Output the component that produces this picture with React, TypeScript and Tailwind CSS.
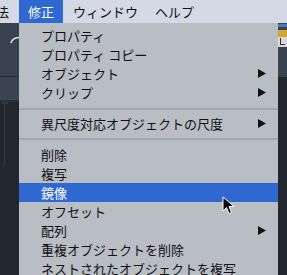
import React from 'react';

type Item = { label: string; sub?: boolean; active?: boolean } | 'sep1' | 'sep2';

const items: Item[] = [
  { label: 'プロパティ' },
  { label: 'プロパティ コピー' },
  { label: 'オブジェクト', sub: true },
  { label: 'クリップ', sub: true },
  'sep1',
  { label: '異尺度対応オブジェクトの尺度', sub: true },
  'sep2',
  { label: '削除' },
  { label: '複写' },
  { label: '鏡像', active: true },
  { label: 'オフセット' },
  { label: '配列', sub: true },
  { label: '重複オブジェクトを削除' },
  { label: 'ネストされたオブジェクトを複写' },
];

const Arrow = ({ white }: { white?: boolean }) => (
  <svg width="8" height="9" viewBox="0 0 8 9" className="absolute left-[239px] top-[5px]">
    <polygon points="0,0 8,4.5 0,9" fill={white ? '#fff' : '#111'} />
  </svg>
);

const App = () => {
  return (
    <div
      className="relative w-[287px] h-[275px] overflow-hidden flex flex-col bg-[#22272e]"
      style={{ fontFamily: '"Noto Sans CJK JP", "Noto Sans", sans-serif' }}
    >
      {/* menu bar */}
      <div className="h-[23px] flex items-stretch bg-[#d4d9e5] text-[13px] text-[#111] shrink-0">
        <div className="w-[19px] overflow-hidden flex items-center">
          <span className="ml-[-4px] whitespace-nowrap">法</span>
        </div>
        <div className="w-[44px] bg-[#2e68d0] text-white flex items-center pl-[9px]">修正</div>
        <div className="w-[92px] flex items-center pl-[10px] whitespace-nowrap">ウィンドウ</div>
        <div className="flex items-center">ヘルプ</div>
      </div>

      <div className="flex flex-1">
        {/* left canvas strip */}
        <div className="w-[19px] flex flex-col">
          <div className="h-[53px] bg-[#3a414e] relative">
            <svg width="10" height="8" viewBox="0 0 10 8" className="absolute left-[10px] top-[13px]">
              <path d="M1 7 Q2 2 9 1.5" stroke="#d8dce2" strokeWidth="1.6" fill="none" />
            </svg>
          </div>
          <div className="h-[1px] bg-[#262b33]" />
          <div className="h-[23px] bg-[#3c4350]" />
          <div className="h-[2px] bg-[#2a2f38]" />
          <div className="flex-1 bg-[#22272e] relative">
            <div className="absolute left-[4px] top-[2px] w-[1px] h-[62px] bg-[#353b45]" />
            <div className="absolute left-[2px] top-0 w-[6px] h-[2px] bg-[#353b45]" />
          </div>
        </div>

        {/* dropdown */}
        <div className="w-[259px] bg-[#b9bdc4] pt-[3px] text-[13px] leading-[19px] text-[#111]">
          {items.map((it, i) => {
            if (it === 'sep1')
              return <div key={i} className="mt-[6px] mb-[4px] h-[2px] bg-[#a3a7ae]" />;
            if (it === 'sep2')
              return <div key={i} className="mt-[5px] mb-[5px] h-[2px] bg-[#a3a7ae]" />;
            return (
              <div
                key={i}
                className={`relative h-[19px] pl-[22px] whitespace-nowrap ${
                  it.active ? 'bg-[#2e68d0] text-white' : ''
                }`}
              >
                {it.label}
                {it.sub && <Arrow white={it.active} />}
              </div>
            );
          })}
        </div>

        {/* right strip */}
        <div className="w-[9px] flex flex-col">
          <div className="h-[7px] bg-[#3a4350] relative">
            <div className="absolute left-0 top-[1px] w-[9px] h-[3px] bg-[#4b78b8]" />
          </div>
          <div className="h-[7px] bg-[#d6a632]" />
          <div className="h-[10px] bg-[#d7d9dc] relative">
            <div className="absolute left-[2px] top-[1px] w-[1px] h-[7px] bg-[#333]" />
            <div className="absolute left-[2px] top-[7px] w-[5px] h-[1px] bg-[#333]" />
          </div>
          <div className="h-[30px] bg-[#3b424f]" />
          <div className="flex-1 bg-[#22272e]" />
        </div>
      </div>

      {/* mouse cursor */}
      <svg width="14" height="20" viewBox="0 0 14 20" className="absolute left-[222px] top-[196px]">
        <path d="M1 1 L1 15 L4.5 11.5 L7 17.5 L9.5 16.5 L7 10.5 L12 10.5 Z" fill="#000" stroke="#fff" strokeWidth="1" />
      </svg>
    </div>
  );
};

export default App;
